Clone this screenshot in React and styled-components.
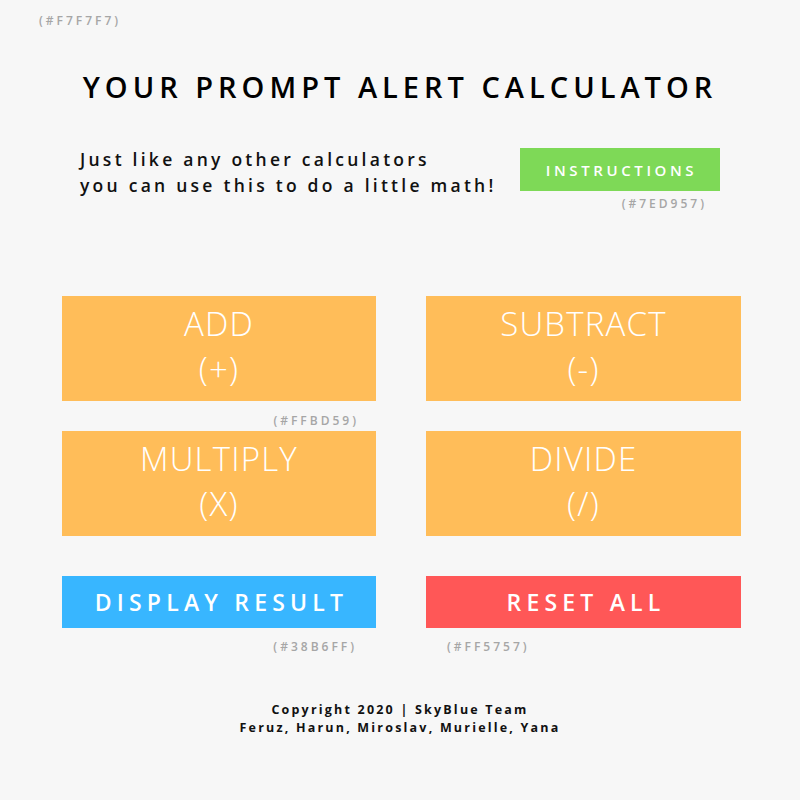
import React from "react";
import styled, { createGlobalStyle } from "styled-components";

const Global = createGlobalStyle`
  html, body { margin: 0; padding: 0; background: #f7f7f7; }
  body { font-family: "Open Sans", "Liberation Sans", sans-serif; }
  * { box-sizing: border-box; }
`;

const Page = styled.div`
  width: 800px;
  height: 800px;
  background: #f7f7f7;
  display: flex;
  flex-direction: column;
  padding: 13px 0 0 0;
`;

const Hex = styled.span`
  font-family: "Open Sans", sans-serif;
  font-size: 12px;
  font-weight: 600;
  letter-spacing: 3px;
  color: #a6a6a6;
  line-height: 16px;
  white-space: nowrap;
`;

const TopHex = styled(Hex)`
  margin-left: 39px;
`;

const Title = styled.h1`
  margin: 42px 0 0 0;
  text-align: center;
  font-family: "Open Sans", sans-serif;
  font-weight: 600;
  font-size: 29px;
  line-height: 32px;
  letter-spacing: 5px;
  color: #000;
`;

const Intro = styled.div`
  display: flex;
  align-items: flex-start;
  justify-content: space-between;
  margin: 45px 80px 0 80px;
`;

const Lead = styled.p`
  margin: -2px 0 0 0;
  font-family: "Open Sans", sans-serif;
  font-weight: 600;
  font-size: 17.5px;
  line-height: 26px;
  letter-spacing: 3.25px;
  color: #111;
`;

const Stack = styled.div`
  display: flex;
  flex-direction: column;
  align-items: flex-end;
  gap: 5px;
`;

const InstructionsButton = styled.button`
  width: 200px;
  height: 43px;
  border: 0;
  background: #7ed957;
  color: #fff;
  font-family: "Open Sans", sans-serif;
  font-weight: 600;
  font-size: 15px;
  letter-spacing: 3.6px;
  padding: 0 0 0 3px;
  cursor: pointer;
`;

const InstrHex = styled(Hex)`
  margin-right: 13px;
`;

const Grid = styled.div`
  display: grid;
  grid-template-columns: 314px 315px;
  column-gap: 50px;
  row-gap: 30px;
  margin: 84px 0 0 62px;
`;

const Cell = styled.div`
  position: relative;
`;

const OpButton = styled.button`
  width: 100%;
  height: 105px;
  border: 0;
  background: #ffbd59;
  color: #fff;
  font-family: "Open Sans", sans-serif;
  font-weight: 300;
  font-size: 33px;
  line-height: 45px;
  letter-spacing: 1.2px;
  display: flex;
  flex-direction: column;
  align-items: center;
  justify-content: center;
  padding: 0 0 5px 0;
  cursor: pointer;
`;

const ActionRow = styled(Grid)`
  margin-top: 40px;
`;

const ActionButton = styled.button`
  width: 100%;
  height: 52px;
  border: 0;
  background: ${(p) => p.$bg};
  color: #fff;
  font-family: "Open Sans", sans-serif;
  font-weight: 600;
  font-size: 23px;
  letter-spacing: 5.2px;
  padding: 0 0 0 5px;
  cursor: pointer;
`;

const Caption = styled(Hex)`
  position: absolute;
  top: calc(100% + ${(p) => p.$gap || 12}px);
  ${(p) => (p.$side === "left" ? `left: ${p.$off}px;` : `right: ${p.$off}px;`)}
`;

const Footer = styled.footer`
  margin-top: 73px;
  text-align: center;
  font-family: "Open Sans", sans-serif;
  font-weight: 700;
  font-size: 12.5px;
  line-height: 18px;
  letter-spacing: 2.2px;
  color: #111;
`;

const ops = [
  { name: "ADD", sym: "(+)", hex: "(#FFBD59)" },
  { name: "SUBTRACT", sym: "(-)" },
  { name: "MULTIPLY", sym: "(X)" },
  { name: "DIVIDE", sym: "(/)" },
];

export default function App() {
  return (
    <Page>
      <Global />
      <TopHex>(#F7F7F7)</TopHex>
      <Title>YOUR PROMPT ALERT CALCULATOR</Title>
      <Intro>
        <Lead>
          Just like any other calculators
          <br />
          you can use this to do a little math!
        </Lead>
        <Stack>
          <InstructionsButton>INSTRUCTIONS</InstructionsButton>
          <InstrHex>(#7ED957)</InstrHex>
        </Stack>
      </Intro>
      <Grid>
        {ops.map((o) => (
          <Cell key={o.name}>
            <OpButton>
              <span>{o.name}</span>
              <span>{o.sym}</span>
            </OpButton>
            {o.hex && (
              <Caption $side="right" $off={17} $gap={12}>
                {o.hex}
              </Caption>
            )}
          </Cell>
        ))}
      </Grid>
      <ActionRow>
        <Cell>
          <ActionButton $bg="#38b6ff">DISPLAY RESULT</ActionButton>
          <Caption $side="right" $off={19} $gap={11}>
            (#38B6FF)
          </Caption>
        </Cell>
        <Cell>
          <ActionButton $bg="#ff5757">RESET ALL</ActionButton>
          <Caption $side="left" $off={21} $gap={11}>
            (#FF5757)
          </Caption>
        </Cell>
      </ActionRow>
      <Footer>
        Copyright 2020 | SkyBlue Team
        <br />
        Feruz, Harun, Miroslav, Murielle, Yana
      </Footer>
    </Page>
  );
}
